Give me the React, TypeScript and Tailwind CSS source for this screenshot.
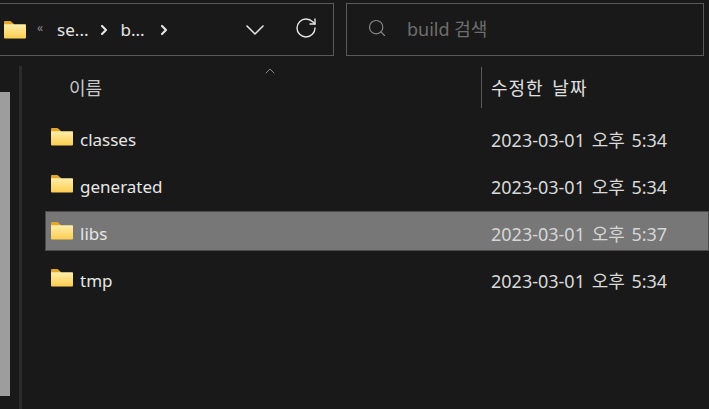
import { ChevronDown, ChevronRight, ChevronUp, RotateCw, Search } from 'lucide-react'

const rows = [
  { name: 'classes', date: '2023-03-01 오후 5:34' },
  { name: 'generated', date: '2023-03-01 오후 5:34' },
  { name: 'libs', date: '2023-03-01 오후 5:37', selected: true },
  { name: 'tmp', date: '2023-03-01 오후 5:34' },
]

function Folder({ className }: { className?: string }) {
  return (
    <svg className={`shrink-0 ${className ?? ''}`} width="22" height="18" viewBox="0 0 22 18">
      <defs>
        <linearGradient id="folderFill" x1="0" y1="0" x2="0" y2="1">
          <stop offset="0" stopColor="#ffeeaa" />
          <stop offset="1" stopColor="#fbcd50" />
        </linearGradient>
      </defs>
      <path d="M0 1.2C0 .5.5 0 1.2 0H6.5L10 3v3H0z" fill="#e3a72c" />
      <path d="M0 3.2h21c.6 0 1 .4 1 1v12c0 .8-.5 1.3-1.2 1.3H1.2C.5 17.5 0 17 0 16.2z" fill="url(#folderFill)" />
    </svg>
  )
}

export default function App() {
  return (
    <div className="w-[709px] h-[409px] overflow-hidden bg-[#191919] text-[#e6e6e6] font-['Noto_Sans','Noto_Sans_CJK_KR',sans-serif]">
      {/* Top bar */}
      <div className="flex h-[56px] pt-[3px] pr-[3px]">
        <div className="flex items-center w-[334px] h-[53px] border border-l-0 border-[#5a5a5a] pl-[4px]">
          <Folder />
          <span className="ml-[11px] -mt-[3px] text-[12px] text-[#8a8a8a]">«</span>
          <span className="ml-[14px] text-[17px]">se...</span>
          <ChevronRight size={16} strokeWidth={3.2} className="ml-[7px]" />
          <span className="ml-[9px] text-[17px]">b...</span>
          <ChevronRight size={16} strokeWidth={3.2} className="ml-[11px]" />
          <ChevronDown size={32} strokeWidth={1.2} className="ml-[67px]" />
          <RotateCw size={24} strokeWidth={1.4} className="ml-[23px] -mt-[3px]" />
        </div>
        <div className="flex items-center w-[358px] h-[53px] ml-[12px] border border-[#5a5a5a] text-[#6e6e6e]">
          <Search size={20} strokeWidth={1.4} className="ml-[20px] -mt-[4px] text-[#8a8a8a]" />
          <span className="ml-[20px] text-[18px]">build 검색</span>
        </div>
      </div>

      <div className="flex h-[353px]">
        {/* Sidebar scrollbar area */}
        <div className="flex w-[22px] h-full shrink-0">
          <div className="w-[10px] h-[304px] mt-[36px] bg-[#9d9d9d]"></div>
          <div className="w-[3px] h-full ml-[9px] mt-[10px] bg-[#2b2b2b]"></div>
        </div>

        <div className="relative flex-1">
          <ChevronUp size={16} strokeWidth={1.3} className="absolute left-[240px] top-[7px] text-[#9a9a9a]" />

          {/* Column headers */}
          <div className="flex h-[41px] mt-[11px]">
            <div className="w-[459px] pl-[47px] pt-[9px] text-[18px] text-[#c8c8c8] leading-[24px]">이름</div>
            <div className="w-px h-full bg-[#5a5a5a]"></div>
            <div className="pl-[9px] pt-[9px] text-[18px] [word-spacing:3px] tracking-[1px] text-[#e0e0e0] leading-[24px]">수정한 날짜</div>
          </div>

          {/* File rows */}
          <div className="flex flex-col mt-[9px] pl-[23px] gap-[7px]">
            {rows.map((row) => (
              <div
                key={row.name}
                className={`flex items-center h-[40px] border ${row.selected ? 'bg-[#777777] border-[#4a4a4a]' : 'border-transparent'}`}
              >
                <Folder className="ml-[5px]" />
                <span className="ml-[7px] mt-[6px] w-[411px] text-[17px]">{row.name}</span>
                <span className={`mt-[6px] text-[18px] [word-spacing:2px] ${row.selected ? 'text-[#d6d6d6]' : 'text-[#dadada]'}`}>{row.date}</span>
              </div>
            ))}
          </div>
        </div>
      </div>
    </div>
  )
}
